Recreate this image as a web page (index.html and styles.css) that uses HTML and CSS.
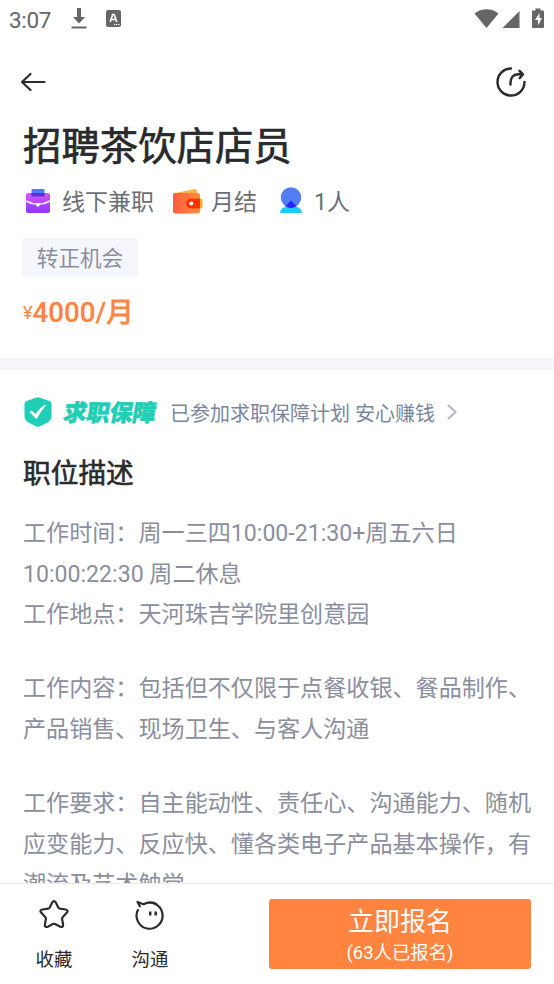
FILE: index.html
```html
<!DOCTYPE html>
<html lang="zh-CN">
<head>
<meta charset="utf-8">
<title>招聘茶饮店店员</title>
<link rel="stylesheet" href="styles.css">
</head>
<body>
<div class="status">
  <span class="time">3:07</span>
  <svg class="download" width="16" height="21" viewBox="0 0 16 21"><path d="M6 0h4v9h4l-6 6.500-6-6.500h4z"/><path d="M.5 18.500h15v2H.5z"/></svg>
  <svg class="lang" width="15" height="17" viewBox="0 0 15 17"><rect width="15" height="17" rx="2"/><path d="M4.200 12l2.500-7.500h1.500L10.800 12M5.300 9.500h4.200" fill="none" stroke="#fff" stroke-width="1.700"/><path d="M8 14.500h5.500" stroke="#fff" stroke-width="1.200" stroke-dasharray="1.300 .8"/></svg>
  <svg class="signals" width="70" height="21" viewBox="0 0 70 21"><path d="M.5 5.500C7-.3 18-.3 24.500 5.500L12.500 20z"/><path d="M45.500 3v17H28.500z"/><path d="M59 2.500h2.500V.5h5v2h2.500q1 0 1 1V19q0 1-1 1H59q-1 0-1-1V3.500q0-1 1-1z"/><path d="M65.500 5l-4.500 7h3v5.500l4-7.500h-2.500z" fill="#fff"/></svg>
</div>
<div class="nav">
  <svg width="26" height="20" viewBox="0 0 26 20"><path d="M24.500 10H2M10.500 2L2 10l8.500 8" fill="none" stroke="#292a2c" stroke-width="2.200" stroke-linecap="round" stroke-linejoin="round"/></svg>
  <svg width="32" height="32" viewBox="0 0 32 32"><g fill="none" stroke="#292a2c" stroke-width="2.400" stroke-linecap="round" stroke-linejoin="round"><path d="M16 2.500A13.500 13.500 0 1 0 29.500 16"/><path d="M15.500 18.500v-2.200c0-5 3.200-8 8.200-8h4M24.500 4.800l3.500 3.500-3.300 3.800"/></g></svg>
</div>
<main>
  <section class="summary">
    <h1>招聘茶饮店店员</h1>
    <div class="meta">
      <svg class="job" width="26" height="26" viewBox="0 0 26 26"><defs><linearGradient id="bag" x2="0" y2="1"><stop stop-color="#d55af2"/><stop offset="1" stop-color="#8b36ff"/></linearGradient></defs><rect x="1" y="5" width="24" height="20" rx="2" fill="url(#bag)"/><rect x="6.500" y="1" width="13" height="7" rx="1" fill="#4c7dff"/><path d="M6.500 5h13v2.500q0 1-1 1h-11q-1 0-1-1z" fill="#5d2fd9"/><path d="M1 13q6 3.200 12 3.200T25 13" fill="none" stroke="#fff" stroke-width="1.500"/><path d="M11 15h4v2l-2 2-2-2z" fill="#fff"/></svg>
      <span>线下兼职</span>
      <svg class="wallet" width="30" height="26" viewBox="0 0 30 26"><defs><linearGradient id="purse"><stop stop-color="#ff5b3d"/><stop offset="1" stop-color="#ff8c3c"/></linearGradient></defs><path d="M2 5l20-4q1.500 0 2 1.500L25 8H2z" fill="#ffb443"/><rect y="5" width="27" height="20.500" rx="2" fill="url(#purse)"/><path d="M18 10.500h10q1.500 0 1.500 1.500v7q0 1.500-1.500 1.500H18a5 5 0 0 1 0-10z" fill="#ffad37"/><path d="M18 10.500h9v10h-9a5 5 0 0 1 0-10z" fill="#ff3200"/><circle cx="18.300" cy="15.500" r="2" fill="#fff"/></svg>
      <span>月结</span>
      <svg class="person" width="22" height="27" viewBox="0 0 22 27"><path d="M0 26q.5-5 5-6l6-6.500 6 6.500q4.500 1 5 6z" fill="#20caff"/><circle cx="11" cy="10.500" r="10.200" fill="#527df5"/><path d="M11 13.500l5.500 5.800a10.200 10.200 0 0 1-11 0z" fill="#2a25ff"/></svg>
      <span>1人</span>
    </div>
    <div class="tag">转正机会</div>
    <div class="price"><small>¥</small><b>4000/<span>月</span></b></div>
  </section>
  <section class="detail">
    <div class="guarantee">
      <svg width="28" height="30" viewBox="0 0 28 30"><path d="M12 .7q2-1 4 0L25.500 4q2 .8 2 2.800V19q0 4-4 6.500L16 29.300q-2 1-4 0L4.500 25.500Q.5 23 .5 19V6.800q0-2 2-2.800z" fill="#20ceb5"/><path d="M5.500 15l2-1.500 4.300 3.200Q16 10.500 21.500 7.500l.7.700Q17 13.500 13 21.500h-1.500z" fill="#fff"/></svg>
      <strong>求职保障</strong>
      <span>已参加求职保障计划 安心赚钱</span>
      <svg class="chevron" width="10" height="16" viewBox="0 0 10 16"><path d="M1.500 1.500L8.500 8l-7 6.500" fill="none" stroke="#b4b7c6" stroke-width="2.200" stroke-linecap="round" stroke-linejoin="round"/></svg>
    </div>
    <h2>职位描述</h2>
    <div class="desc">
      <p>工作时间：周一三四10:00-21:30+周五六日<br>10:00:22:30 周二休息<br>工作地点：天河珠吉学院里创意园</p>
      <p>工作内容：包括但不仅限于点餐收银、餐品制作、<br>产品销售、现场卫生、与客人沟通</p>
      <p>工作要求：自主能动性、责任心、沟通能力、随机<br>应变能力、反应快、懂各类电子产品基本操作，有<br>潮流及艺术触觉</p>
    </div>
  </section>
</main>
<footer>
  <div class="action">
    <svg width="32" height="32" viewBox="0 0 32 32"><path d="M14.200 3.500q1.800-2.800 3.600 0l2.600 5.200q.5.900 1.500 1l5.700.8q3.200.6 1.300 3.100l-4.300 4.600q-.7.700-.5 1.700l1 5.600q.2 3.300-2.800 2.200l-5.200-2.600q-1.100-.5-2.200 0l-5.200 2.600q-3 1.100-2.800-2.200l1-5.600q.2-1-.5-1.700l-4.300-4.600q-1.900-2.500 1.300-3.100l5.700-.8q1-.1 1.500-1z" fill="none" stroke="#292a2c" stroke-width="2.200" stroke-linejoin="round"/></svg>
    <span>收藏</span>
  </div>
  <div class="action">
    <svg width="32" height="32" viewBox="0 0 32 32"><path d="M4.300 10.200A13 13 0 1 0 9.500 5.200L3.500 3l2.800 5M9.500 5.200Q17 1.500 23 5.500" fill="none" stroke="#292a2c" stroke-width="2.200" stroke-linejoin="round"/><path d="M16.200 12.500v4M21.700 12.500v4" stroke="#292a2c" stroke-width="2.500"/></svg>
    <span>沟通</span>
  </div>
  <button class="apply"><span>立即报名</span><small>(63人已报名)</small></button>
</footer>
</body>
</html>
```
FILE: styles.css
```css
* { box-sizing: border-box; }
body {
  margin: 0;
  height: 984px;
  display: flex;
  flex-direction: column;
  overflow: hidden;
  background: #fff;
  color: #292a2c;
  font-family: Roboto, "Noto Sans CJK SC", sans-serif;
}
svg { display: block; flex: none; }
h1, h2, p { margin: 0; font-weight: 400; }
.status { flex: none; height: 38px; display: flex; align-items: center; padding: 0 10px 0 9px; color: #666; fill: #666; }
.time { width: 62px; font-size: 22.5px; letter-spacing: -.3px; padding-top: 1px; }
.download { margin-top: -1px; margin-right: 19px; }
.lang { margin-top: -2px; }
.signals { margin-left: auto; margin-top: -1px; }
.nav { flex: none; height: 82px; padding: 0 27px 0 20px; display: flex; justify-content: space-between; align-items: center; }
.nav svg { margin-top: 6px; }
main { flex: 1; min-height: 0; overflow: hidden; }
.summary { height: 250px; border-bottom: 12px solid #f5f6fb; padding: 2px 22px 0; }
h1 { font-size: 38.4px; line-height: 50px; margin-left: 1px; -webkit-text-stroke: .7px; }
.meta { height: 32px; margin-top: 14px; display: flex; align-items: center; color: #6c6e76; font-size: 23px; line-height: 30px; }
.meta span { padding-top: 2px; }
.meta svg { margin-top: -3px; }
.meta .job { margin-left: 3px; margin-right: 11px; }
.meta .wallet { margin-left: 19px; margin-right: 8px; }
.meta .person { margin-left: 23px; margin-right: 12px; }
.tag { width: 116px; height: 39px; margin-top: 20px; border-radius: 3px; background: #f5f6fb; color: #8b8e9d; font-size: 21.6px; line-height: 41px; text-align: center; }
.price { display: flex; align-items: baseline; margin: 16px 0 0 1px; height: 40px; line-height: 40px; color: #ff843f; }
.price small { font-size: 18px; align-self: center; }
.price b { font-size: 27.7px; font-weight: 500; -webkit-text-stroke: .2px; }
.price span { font-weight: 400; -webkit-text-stroke: .8px; }
.detail { padding: 27px 20px 0 24px; }
.guarantee { height: 30px; display: flex; align-items: center; color: #7a869d; font-size: 20px; line-height: 30px; white-space: nowrap; }
.guarantee span, .guarantee strong { padding-top: 4px; }
.guarantee strong { width: 106px; padding-left: 12px; margin-right: 12px; color: #20ceb5; font-size: 23px; font-weight: 900; -webkit-text-stroke: .6px; transform: skewX(-10deg); }
.chevron { margin-left: 12px; }
h2 { margin: 27px 0 0 -1px; font-size: 27.7px; line-height: 40px; -webkit-text-stroke: .6px; }
.desc { margin: 20px 0 0 -1px; color: #8b8e9d; font-size: 23.1px; line-height: 40.7px; white-space: nowrap; }
.desc p { margin-bottom: 33.2px; }
footer { flex: none; height: 101px; border-top: 1px solid #ececee; background: #fff; display: flex; padding: 15px 23px 0 6px; }
.action { width: 96px; display: flex; flex-direction: column; align-items: center; font-size: 18.4px; line-height: 28px; }
.action span { margin-top: 15px; }
.action svg { margin-left: -1px; }
.apply { width: 262px; height: 70px; margin-left: auto; border: 0; padding: 3px 0 0; border-radius: 3px; background: #ff843f; color: #fff; font-family: inherit; display: flex; flex-direction: column; align-items: center; justify-content: center; }
.apply span { font-size: 26px; line-height: 33px; }
.apply small { font-size: 18.4px; line-height: 27px; }
```
